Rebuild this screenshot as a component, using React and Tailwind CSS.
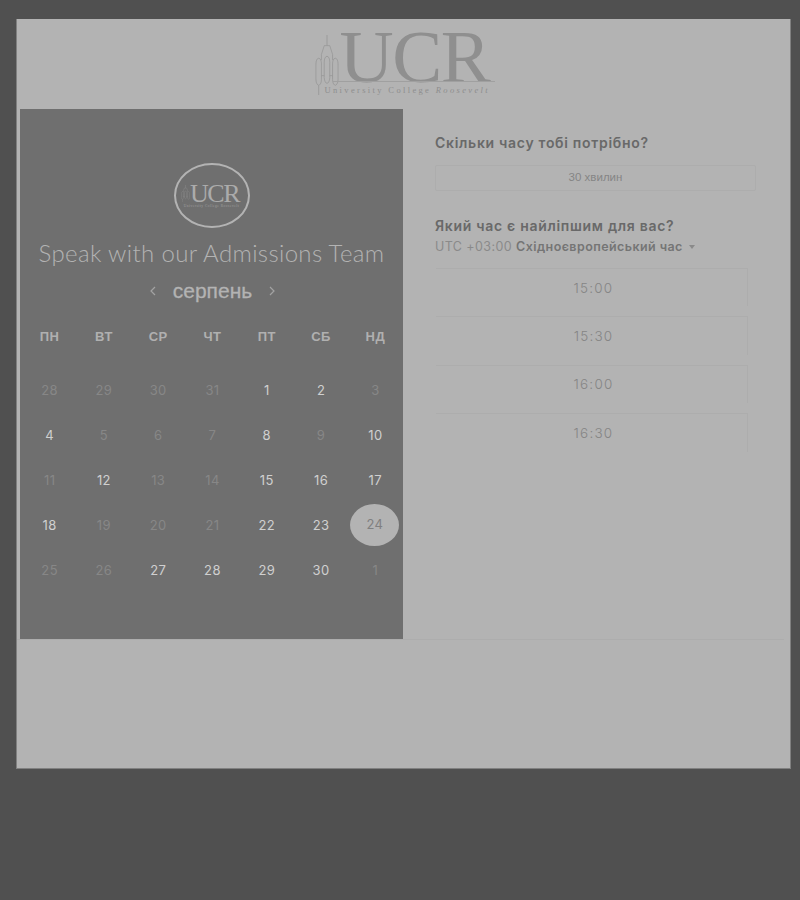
const weekDays = ['ПН', 'ВТ', 'СР', 'ЧТ', 'ПТ', 'СБ', 'НД'];

// active = day can be booked
const days = [
  { n: 28 }, { n: 29 }, { n: 30 }, { n: 31 }, { n: 1, active: true }, { n: 2, active: true }, { n: 3 },
  { n: 4, active: true }, { n: 5 }, { n: 6 }, { n: 7 }, { n: 8, active: true }, { n: 9 }, { n: 10, active: true },
  { n: 11 }, { n: 12, active: true }, { n: 13 }, { n: 14 }, { n: 15, active: true }, { n: 16, active: true }, { n: 17, active: true },
  { n: 18, active: true }, { n: 19 }, { n: 20 }, { n: 21 }, { n: 22, active: true }, { n: 23, active: true }, { n: 24, selected: true },
  { n: 25 }, { n: 26 }, { n: 27, active: true }, { n: 28, active: true }, { n: 29, active: true }, { n: 30, active: true }, { n: 1 },
];

const slots = ['15:00', '15:30', '16:00', '16:30'];

const Tower = ({ className, color }) => (
  <svg viewBox="0 0 26 62" className={className} fill="none" stroke={color} strokeWidth="0.8" preserveAspectRatio="none">
    <path d="M13 0V11M10 11h6M10 11 7 20V26M16 11l3 9V26" />
    <path d="M4 24C2 24 1 27 1 30V46C1 50 3 52 4 52C5 52 7 50 7 46V30C7 27 6 24 4 24Z" />
    <path d="M22 24C20 24 19 27 19 30V46C19 50 21 52 22 52C23 52 25 50 25 46V30C25 27 24 24 22 24Z" />
    <path d="M13 22C11 22 10 25 10 28V44C10 48 12 50 13 50C14 50 16 48 16 44V28C16 25 15 22 13 22Z" />
    <path d="M4 52V62M7 42H10M16 42H19" />
  </svg>
);

const HeaderLogo = () => (
  <div className="relative w-[180px] h-[78px] mt-[12px]">
    <Tower className="absolute left-0 top-[4px] w-[24px] h-[60px]" color="#969696" />
    <div className="absolute left-[25px] top-[1px] text-[75px] leading-[50px] tracking-[-1.5px] text-[#8f8f8f] font-['Liberation_Serif',serif]">
      UCR
    </div>
    <div className="absolute left-[18px] right-0 top-[50px] border-t border-[#a0a0a0]" />
    <div className="absolute left-[10px] top-[52px] text-[8.5px] leading-[14px] tracking-[2.35px] whitespace-nowrap text-[#8e8e8e] font-['Liberation_Serif',serif]">
      University College <span className="italic">Roosevelt</span>
    </div>
  </div>
);

const CircleLogo = () => (
  <div className="w-[76px] h-[65px] rounded-[50%] border-[2.5px] border-[#b3b3b3] flex flex-col items-center justify-center">
    <div className="flex items-end h-[20px] mt-[1px] mr-[3px]">
      <Tower className="w-[9px] h-[17px] mb-[2px]" color="#a0a0a0" />
      <span className="text-[26px] leading-[20px] tracking-[-1.5px] text-[#ababab] font-['Liberation_Serif',serif]">UCR</span>
    </div>
    <div className="text-[3.5px] leading-[5px] tracking-[0.5px] whitespace-nowrap text-[#a0a0a0] font-['Liberation_Serif',serif]">
      University College Roosevelt
    </div>
  </div>
);

const Calendar = () => (
  <div className="w-[383px] h-[530px] bg-[#6f6f6f] flex flex-col items-center pt-[54px] shrink-0">
    <CircleLogo />
    <h1 className="mt-[9px] text-[24px] leading-[32px] font-light whitespace-nowrap text-[#b3b3b3] font-['Lato',sans-serif] tracking-[0.35px]">
      Speak with our Admissions Team
    </h1>
    <div className="mt-[8px] ml-[2px] flex items-center h-[28px] gap-[16px] text-[#b3b3b3] font-['Liberation_Sans',sans-serif]">
      <svg viewBox="0 0 8 10" className="w-[8px] h-[10px]" fill="none" stroke="#a3a3a3" strokeWidth="1.2">
        <path d="M6 1 2 5l4 4" />
      </svg>
      <span className="text-[21px] leading-[28px] [-webkit-text-stroke:0.3px_#b3b3b3]">серпень</span>
      <svg viewBox="0 0 8 10" className="w-[8px] h-[10px]" fill="none" stroke="#a3a3a3" strokeWidth="1.2">
        <path d="M2 1l4 4-4 4" />
      </svg>
    </div>
    <div className="mt-[23px] ml-[2px] w-[380px] grid grid-cols-7 text-center text-[13px] leading-[18px] font-bold tracking-[0.4px] text-[#b0b0b0] font-['Liberation_Sans',sans-serif]">
      {weekDays.map((d) => (
        <div key={d}>{d}</div>
      ))}
    </div>
    <div className="mt-[22px] ml-[2px] w-[380px] grid grid-cols-7 auto-rows-[45px] text-center text-[13px] tracking-[0.4px] font-['Inter',sans-serif]">
      {days.map((d, i) => (
        <div key={i} className="flex items-center justify-center">
          {d.selected ? (
            <span className="-ml-px -mt-[2px] w-[49px] h-[42px] rounded-[50%] bg-[#b3b3b3] text-[#808080] flex items-center justify-center">
              {d.n}
            </span>
          ) : (
            <span className={d.active ? 'text-[#d0d0d0]' : 'text-[#878787]'}>{d.n}</span>
          )}
        </div>
      ))}
    </div>
  </div>
);

const Booking = () => (
  <div className="flex-1 pl-[32px] pr-[31px] pt-[25px] font-['Inter',sans-serif]">
    <h2 className="text-[14px] leading-[18px] font-semibold text-[#696969] tracking-[0.7px]">Скільки часу тобі потрібно?</h2>
    <div className="mt-[13px] w-[321px] h-[26px] rounded-[2px] border border-[#adadad] flex items-center justify-center text-[11.5px] text-[#858585] font-['Liberation_Sans',sans-serif]">
      30 хвилин
    </div>
    <h2 className="mt-[26px] text-[14px] leading-[18px] font-semibold text-[#696969] tracking-[0.7px]">Який час є найліпшим для вас?</h2>
    <div className="mt-[3px] flex items-center text-[12.5px] leading-[18px] text-[#8a8a8a] tracking-[0.42px]">
      <span>UTC +03:00</span>
      <span className="ml-[4px] font-semibold text-[#757575]">Східноєвропейський час</span>
      <span className="ml-[6px] w-0 h-0 border-x-[3.5px] border-x-transparent border-t-[4px] border-t-[#8a8a8a]" />
    </div>
    <div className="mt-[12px] w-[312px] ml-[1px] flex flex-col gap-[10px]">
      {slots.map((s) => (
        <div
          key={s}
          className="h-[38.4px] pl-[4px] border-t border-r border-[#adadad] flex items-center justify-center text-[13.5px] tracking-[1.2px] text-[#858585] font-light"
        >
          {s}
        </div>
      ))}
    </div>
  </div>
);

export default function App() {
  return (
    <div className="w-[800px] h-[900px] bg-[#505050] pt-[19px] pl-[16px] overflow-hidden">
      <div className="w-[775px] h-[750px] bg-[#b3b3b3] border-l border-r border-b border-[#808080] flex flex-col">
        <div className="h-[90px] flex justify-center pl-[2px] shrink-0">
          <HeaderLogo />
        </div>
        <div className="flex pl-[3px] border-b border-[#adadad] mr-[6px]">
          <Calendar />
          <Booking />
        </div>
      </div>
    </div>
  );
}
